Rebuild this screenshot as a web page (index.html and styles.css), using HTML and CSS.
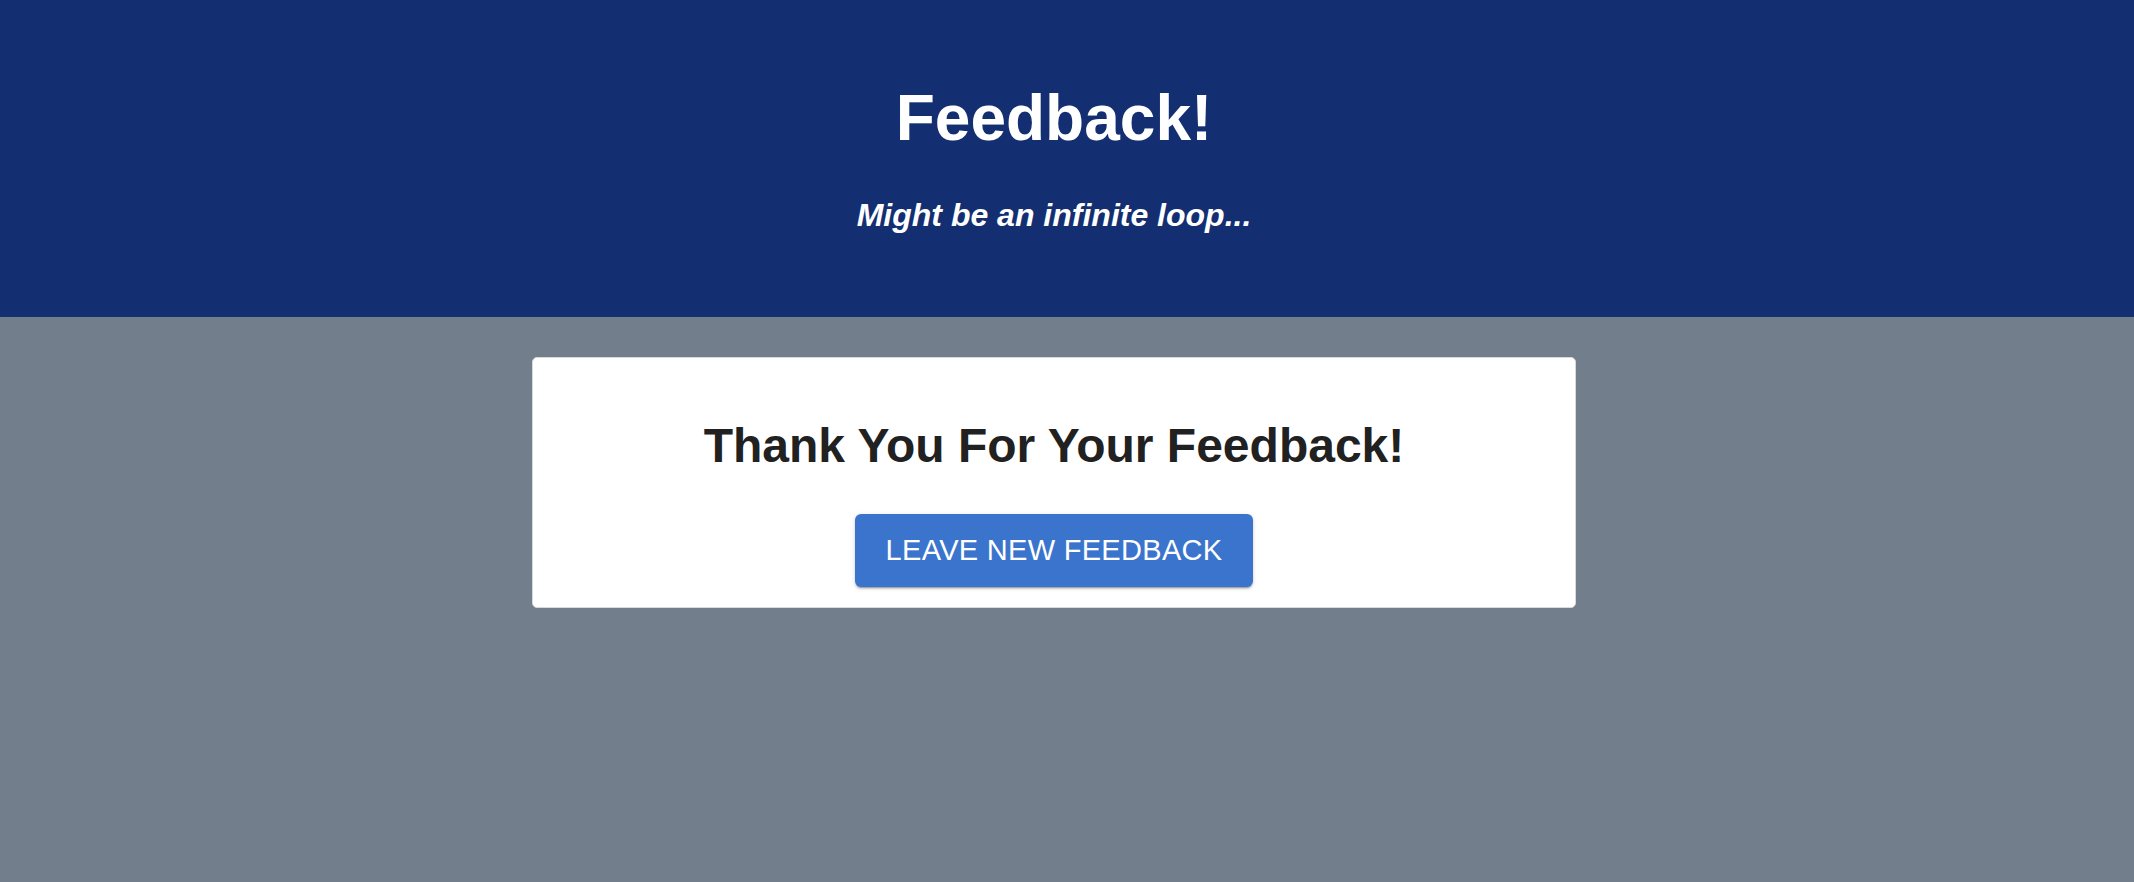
FILE: index.html
```html
<!DOCTYPE html>
<html lang="en">
<head>
<meta charset="utf-8">
<title>Feedback!</title>
<link rel="stylesheet" href="styles.css">
</head>
<body>
<header class="hero">
  <h1 class="hero-title">Feedback!</h1>
  <p class="hero-sub">Might be an infinite loop...</p>
</header>
<main class="content">
  <section class="card">
    <h2 class="card-title">Thank You For Your Feedback!</h2>
    <button class="btn" type="button">Leave New Feedback</button>
  </section>
</main>
</body>
</html>
```
FILE: styles.css
```css
* { box-sizing: border-box; }
html, body {
  margin: 0;
  padding: 0;
}
body {
  min-height: 100vh;
  background: #737e8c;
  font-family: "Liberation Sans", Arial, Helvetica, sans-serif;
}
.hero {
  background: #132e71;
  color: #ffffff;
  text-align: center;
  padding: 82px 26px 83.6px 0;
}
.hero-title {
  margin: 0 0 41px;
  font-size: 64px;
  line-height: 1.15;
  font-weight: 700;
}
.hero-sub {
  margin: 0;
  font-size: 32px;
  line-height: 1.15;
  font-weight: 700;
  font-style: italic;
}
.content {
  display: flex;
  justify-content: center;
  padding: 40px 26px 0 0;
}
.card {
  width: 1044px;
  background: #ffffff;
  border: 1px solid #d9d9d9;
  border-radius: 5px;
  display: flex;
  flex-direction: column;
  align-items: center;
  padding: 60px 0 20px;
}
.card-title {
  margin: 0 0 41px;
  font-size: 48px;
  line-height: 1.15;
  font-weight: 700;
  color: #212121;
}
.btn {
  font-family: "Liberation Sans", Arial, Helvetica, sans-serif;
  font-size: 29px;
  line-height: 1.15;
  letter-spacing: 0.3px;
  text-transform: uppercase;
  color: #ffffff;
  background: #3a74cd;
  border: none;
  border-radius: 6px;
  padding: 20px 30px;
  width: 398px;
  height: 73px;
  box-shadow: 0 3px 1px -2px rgba(0,0,0,0.2), 0 2px 2px 0 rgba(0,0,0,0.14), 0 1px 5px 0 rgba(0,0,0,0.12);
  cursor: pointer;
}
```
